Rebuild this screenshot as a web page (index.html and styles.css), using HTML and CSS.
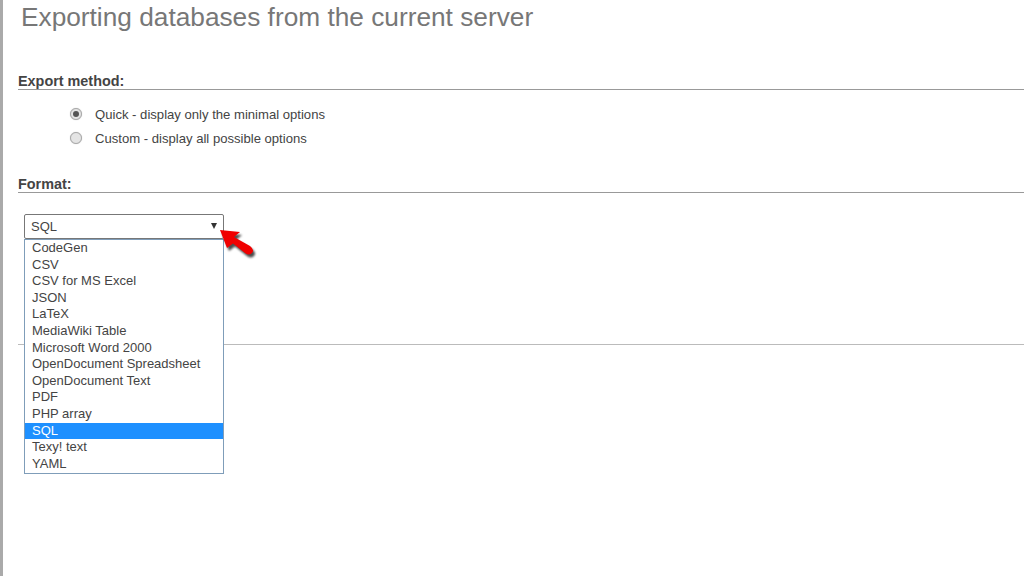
FILE: index.html
```html
<!DOCTYPE html>
<html lang="en">

<head>
    <meta charset="UTF-8">
    <title>Exporting databases</title>
    <link rel="stylesheet" href="styles.css">
</head>

<body>
    <div id="container">
        <h2 class="page-title">Exporting databases from the current server</h2>

        <div class="section section-method">
            <h3 class="section-title">Export method:</h3>
            <ul class="radio-list">
                <li class="radio-row"><span class="radio radio-on"></span>Quick - display only the minimal options</li>
                <li class="radio-row"><span class="radio"></span>Custom - display all possible options</li>
            </ul>
        </div>

        <div class="section section-format">
            <h3 class="section-title">Format:</h3>
            <div class="select-wrap">
                <div class="select-box">
                    <span>SQL</span>
                    <span class="select-caret"></span>
                </div>
                <ul class="select-list">
                    <li>CodeGen</li>
                    <li>CSV</li>
                    <li>CSV for MS Excel</li>
                    <li>JSON</li>
                    <li>LaTeX</li>
                    <li>MediaWiki Table</li>
                    <li>Microsoft Word 2000</li>
                    <li>OpenDocument Spreadsheet</li>
                    <li>OpenDocument Text</li>
                    <li>PDF</li>
                    <li>PHP array</li>
                    <li class="selected">SQL</li>
                    <li>Texy! text</li>
                    <li>YAML</li>
                </ul>
                <!-- red pointer added on the screenshot -->
                <svg class="pointer" width="40" height="34" viewBox="0 0 40 34">
                    <path class="pointer-arrow" d="M0 1 L20 3 L14 8 L30 17 Q35 21 32 24 Q29 27 25 24 L13 14.5 L7 19 Z" />
                </svg>
            </div>
        </div>

        <hr class="bottom-rule">
    </div>
</body>

</html>
```

FILE: styles.css
```css
* {
    margin: 0;
    padding: 0;
    box-sizing: border-box;
}

html,
body {
    height: 100%;
    overflow: hidden;
}

body {
    background-color: white;
    font-family: "Liberation Sans", Arial, sans-serif;
    font-size: 13px;
    color: #444;
}

#container {
    height: 576px;
    border-left: 3px solid #aaa;
    padding-left: 15px;
    display: flex;
    flex-direction: column;
}

.page-title {
    height: 33px;
    margin-left: 3px;
    font-size: 26.25px;
    line-height: 35px;
    font-weight: normal;
    color: #777;
}

.section-title {
    height: 18px;
    font-size: 14.4px;
    line-height: 19px;
    font-weight: bold;
    color: #444;
    border-bottom: 1px solid #999;
}

.section-method {
    margin-top: 39px;
}

.radio-list {
    list-style: none;
    padding: 12px 0 0 52px;
}

.radio-row {
    display: flex;
    align-items: center;
    height: 24px;
    gap: 13px;
    font-size: 13.1px;
}

.radio {
    width: 12px;
    height: 12px;
    border-radius: 50%;
    border: 1px solid #a9a9a9;
    background-color: #e4e4e4;
    box-shadow: 0 0 1px #bbb;
    position: relative;
}

.radio-on::after {
    content: "";
    position: absolute;
    top: 2px;
    left: 2px;
    width: 6px;
    height: 6px;
    border-radius: 50%;
    background-color: #555;
}

.section-format {
    margin-top: 25px;
}

.select-wrap {
    position: relative;
    width: 200px;
    margin: 21px 0 0 6px;
}

.select-box {
    height: 25px;
    padding: 0 6px 0 6px;
    display: flex;
    align-items: center;
    justify-content: space-between;
    border: 1px solid #777;
    border-radius: 2px;
    background-color: white;
}

.select-caret {
    width: 0;
    height: 0;
    margin-bottom: 1px;
    border-left: 3.5px solid transparent;
    border-right: 3.5px solid transparent;
    border-top: 6px solid #333;
}

.select-list {
    position: absolute;
    top: 25px;
    left: 0;
    width: 200px;
    height: 235px;
    padding-bottom: 1px;
    list-style: none;
    background-color: white;
    border: 1px solid #7f9db9;
    z-index: 2;
}

.select-list li {
    height: 16.6px;
    line-height: 15px;
    padding-left: 7px;
}

.select-list .selected {
    background-color: #1e90ff;
    color: white;
}

.pointer {
    position: absolute;
    top: 15px;
    left: 196px;
    z-index: 3;
}

.pointer-arrow {
    fill: #f00000;
    filter: drop-shadow(2px 3px 1px rgba(0, 0, 0, 0.7));
}

.bottom-rule {
    border: 0;
    border-top: 1px solid #bbb;
    margin-top: 105px;
}
```
